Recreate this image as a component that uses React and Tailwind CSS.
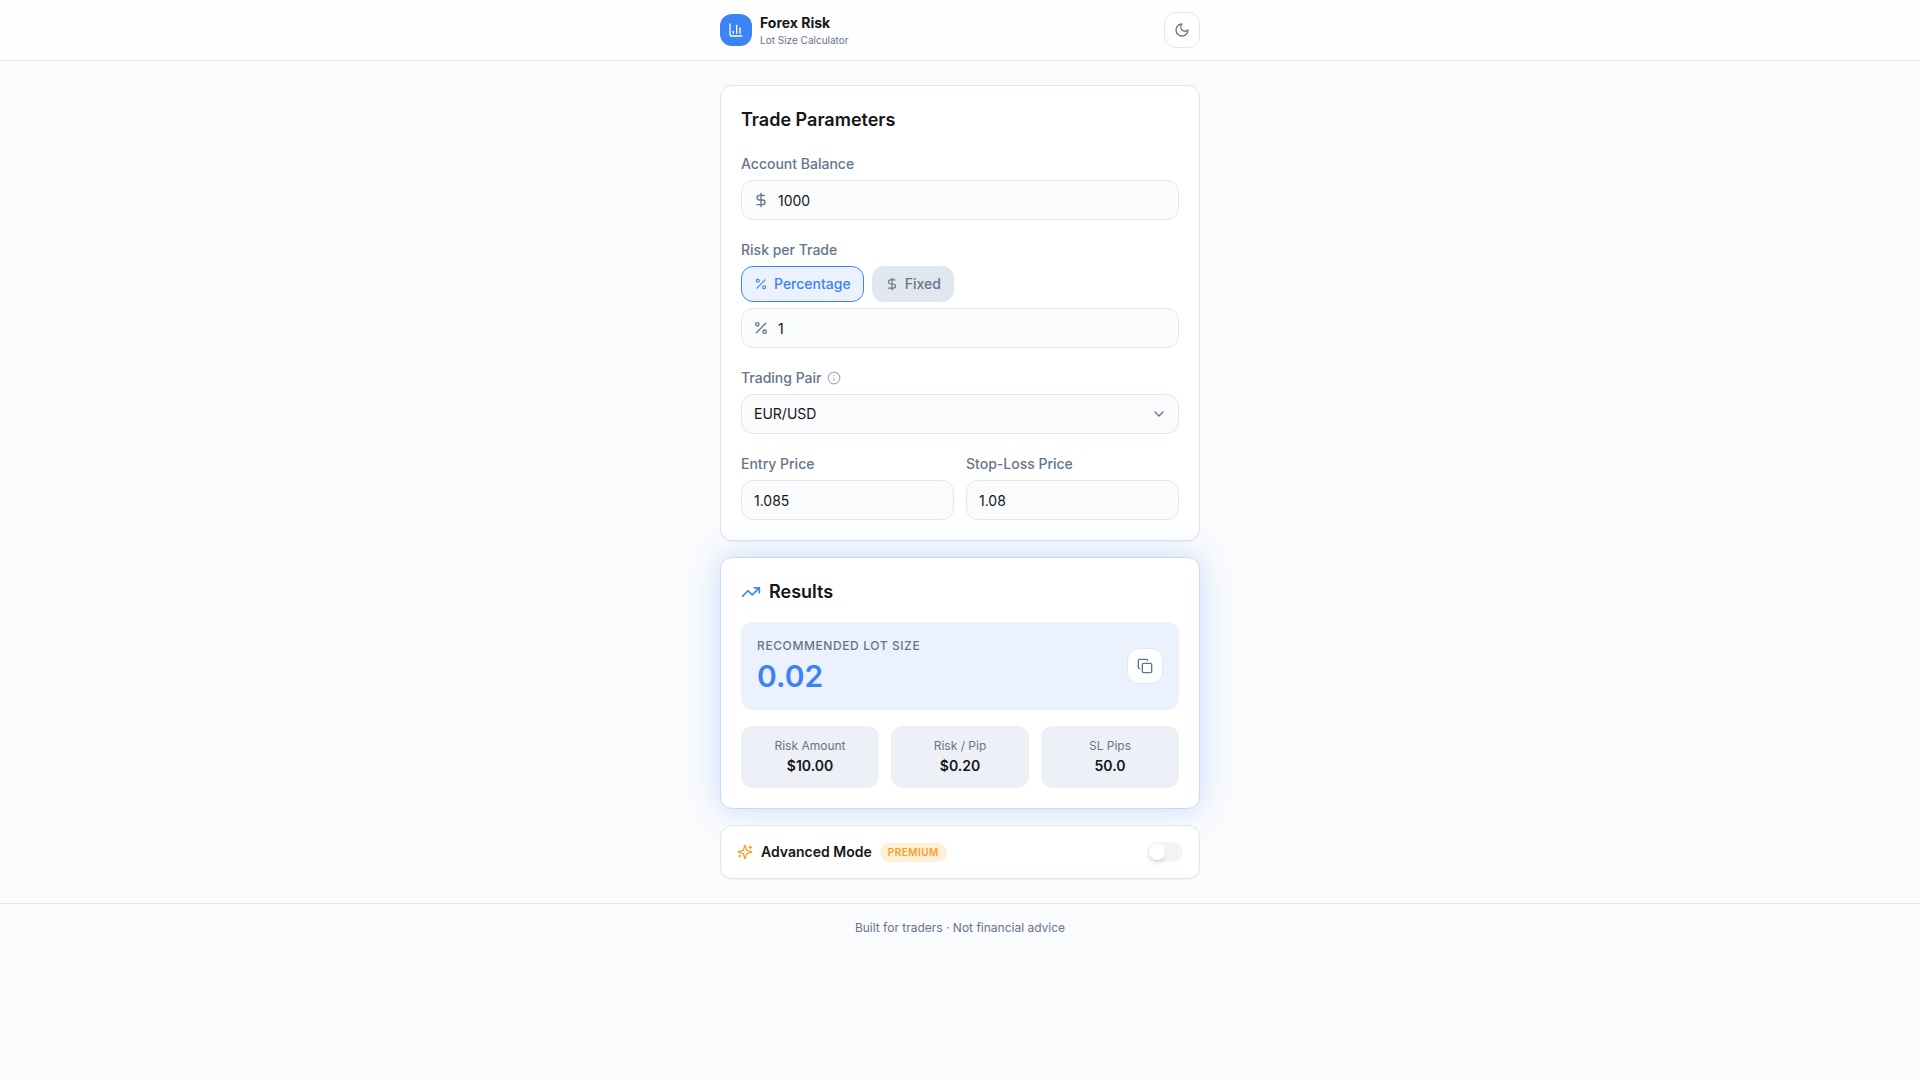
import { useState } from "react";
import {
  ChartColumn,
  ChevronDown,
  Copy,
  DollarSign,
  Info,
  Percent,
  TrendingUp,
} from "lucide-react";

const fieldClass =
  "h-10 w-full rounded-xl border border-[#e1e7ef] bg-[#fafbfd] text-sm text-[#14161a] outline-none focus:border-[#3c83f6]";
const labelClass = "text-sm font-medium text-[#65758b]";

function StrokeIcon({ className, children }) {
  return (
    <svg
      viewBox="0 0 24 24"
      fill="none"
      stroke="currentColor"
      strokeWidth="2"
      strokeLinecap="round"
      strokeLinejoin="round"
      aria-hidden="true"
      className={className}
    >
      {children}
    </svg>
  );
}

function MoonIcon({ className }) {
  return (
    <StrokeIcon className={className}>
      <path d="M12 3a6 6 0 0 0 9 9 9 9 0 1 1-9-9Z" />
    </StrokeIcon>
  );
}

function SparklesIcon({ className }) {
  return (
    <StrokeIcon className={className}>
      <path d="M9.937 15.5A2 2 0 0 0 8.5 14.063l-6.135-1.582a.5.5 0 0 1 0-.962L8.5 9.936A2 2 0 0 0 9.937 8.5l1.582-6.135a.5.5 0 0 1 .963 0L14.063 8.5A2 2 0 0 0 15.5 9.937l6.135 1.581a.5.5 0 0 1 0 .964L15.5 14.063a2 2 0 0 0-1.437 1.437l-1.582 6.135a.5.5 0 0 1-.963 0z" />
      <path d="M20 3v4" />
      <path d="M22 5h-4" />
      <path d="M4 17v2" />
      <path d="M5 18H3" />
    </StrokeIcon>
  );
}

function Field({ id, label, icon: Icon, defaultValue }) {
  return (
    <div className="flex flex-col gap-1.5">
      <label htmlFor={id} className={labelClass}>
        {label}
      </label>
      <div className="relative">
        {Icon && (
          <Icon className="pointer-events-none absolute top-3 left-3 size-4 text-[#65758b]" />
        )}
        <input
          id={id}
          type="text"
          inputMode="decimal"
          defaultValue={defaultValue}
          className={`${fieldClass} ${Icon ? "pr-3 pl-9" : "px-3"}`}
        />
      </div>
    </div>
  );
}

function ModeButton({ icon: Icon, label, active, onClick }) {
  return (
    <button
      type="button"
      aria-pressed={active}
      onClick={onClick}
      className={`flex h-9 items-center gap-1.5 rounded-xl border px-3 text-sm font-medium ${
        active
          ? "border-[#3c83f6] bg-[#ebf2fe] text-[#3c83f6]"
          : "border-[#e1e7ef] bg-[#e1e7ef] text-[#65758b]"
      }`}
    >
      <Icon className="size-3.5" />
      {label}
    </button>
  );
}

function Stat({ label, value }) {
  return (
    <div className="flex flex-col gap-0.5 rounded-xl bg-[#edf0f6] p-3 text-center">
      <span className="text-xs text-[#65758b]">{label}</span>
      <span className="text-sm font-semibold">{value}</span>
    </div>
  );
}

export default function App() {
  const [mode, setMode] = useState("percentage");
  const [advanced, setAdvanced] = useState(false);
  const RiskIcon = mode === "percentage" ? Percent : DollarSign;

  return (
    <div className="min-h-screen bg-[#fafbfd] font-['Inter',sans-serif] text-[#14161a]">
      <header className="border-b border-[#e1e7ef] bg-[#fefefe]">
        <div className="mx-auto flex max-w-lg items-center justify-between px-4 py-3">
          <div className="flex items-center gap-2">
            <div className="flex size-8 items-center justify-center rounded-xl bg-[#3c83f6] text-white">
              <ChartColumn className="size-4" />
            </div>
            <div>
              <h1 className="text-sm leading-5 font-bold">Forex Risk</h1>
              <p className="text-[10px] leading-[14px] text-[#65758b]">Lot Size Calculator</p>
            </div>
          </div>
          <button
            type="button"
            aria-label="Toggle dark mode"
            className="flex size-9 items-center justify-center rounded-xl border border-[#e1e7ef] bg-white text-[#65758b]"
          >
            <MoonIcon className="size-4" />
          </button>
        </div>
      </header>

      <main className="mx-auto flex max-w-lg flex-col gap-4 px-4 py-6">
        <section className="flex flex-col gap-5 rounded-xl border border-[#e1e7ef] bg-white p-5 shadow-[0_1px_2px_rgba(0,0,0,0.05)]">
          <h2 className="text-lg leading-7 font-semibold">Trade Parameters</h2>
          <Field id="balance" label="Account Balance" icon={DollarSign} defaultValue="1000" />

          <div className="flex flex-col gap-1.5">
            <label htmlFor="risk" className={labelClass}>
              Risk per Trade
            </label>
            <div className="flex gap-2">
              <ModeButton
                icon={Percent}
                label="Percentage"
                active={mode === "percentage"}
                onClick={() => setMode("percentage")}
              />
              <ModeButton
                icon={DollarSign}
                label="Fixed"
                active={mode === "fixed"}
                onClick={() => setMode("fixed")}
              />
            </div>
            <div className="relative">
              <RiskIcon className="pointer-events-none absolute top-3 left-3 size-4 text-[#65758b]" />
              <input
                id="risk"
                type="text"
                inputMode="decimal"
                defaultValue="1"
                className={`${fieldClass} pr-3 pl-9`}
              />
            </div>
          </div>

          <div className="flex flex-col gap-1.5">
            <div className="flex items-center gap-1.5">
              <label htmlFor="pair" className={labelClass}>
                Trading Pair
              </label>
              <Info className="size-3.5 text-[#a3acb9]" />
            </div>
            <div className="relative">
              <select id="pair" className={`${fieldClass} appearance-none px-3`}>
                <option>EUR/USD</option>
              </select>
              <ChevronDown className="pointer-events-none absolute top-3 right-3 size-4 text-[#65758b]" />
            </div>
          </div>

          <div className="grid grid-cols-2 gap-3">
            <Field id="entry" label="Entry Price" defaultValue="1.085" />
            <Field id="stop" label="Stop-Loss Price" defaultValue="1.08" />
          </div>
        </section>

        <section className="flex flex-col gap-4 rounded-xl border border-[#c4dafc] bg-white p-5 shadow-[0_0_32px_rgba(60,131,246,0.25)]">
          <h2 className="flex items-center gap-2 text-lg leading-7 font-semibold">
            <TrendingUp className="size-5 text-[#3c83f6]" />
            Results
          </h2>
          <div className="flex items-center justify-between rounded-xl bg-[#ebf2fe] p-4">
            <div className="flex flex-col gap-1">
              <span className="text-xs font-medium tracking-wider text-[#65758b] uppercase">
                Recommended Lot Size
              </span>
              <span className="text-3xl font-semibold text-[#3c83f6]">0.02</span>
            </div>
            <button
              type="button"
              aria-label="Copy lot size"
              className="flex size-9 items-center justify-center rounded-xl border border-[#e1e7ef] bg-white text-[#65758b]"
            >
              <Copy className="size-4" />
            </button>
          </div>
          <div className="grid grid-cols-3 gap-3">
            <Stat label="Risk Amount" value="$10.00" />
            <Stat label="Risk / Pip" value="$0.20" />
            <Stat label="SL Pips" value="50.0" />
          </div>
        </section>

        <section className="flex items-center justify-between rounded-xl border border-[#e1e7ef] bg-white p-4 shadow-[0_1px_2px_rgba(0,0,0,0.05)]">
          <div className="flex items-center gap-2">
            <SparklesIcon className="size-4 text-[#f9a01f]" />
            <span id="advanced-label" className="text-sm font-semibold">
              Advanced Mode
            </span>
            <span className="rounded-full bg-[#feefd8] px-2 py-0.5 text-[10px] leading-[15px] font-semibold tracking-wider text-[#f9a01f] uppercase">
              Premium
            </span>
          </div>
          <button
            type="button"
            role="switch"
            aria-checked={advanced}
            aria-labelledby="advanced-label"
            onClick={() => setAdvanced(!advanced)}
            className={`flex h-5 w-9 items-center rounded-full border-2 border-transparent ${
              advanced ? "justify-end bg-[#3c83f6]" : "justify-start bg-[#f3f4f6]"
            }`}
          >
            <span className="size-4 rounded-full bg-white shadow-md" />
          </button>
        </section>
      </main>

      <footer className="border-t border-[#e1e7ef] py-4 text-center text-xs text-[#65758b]">
        Built for traders · Not financial advice
      </footer>
    </div>
  );
}
